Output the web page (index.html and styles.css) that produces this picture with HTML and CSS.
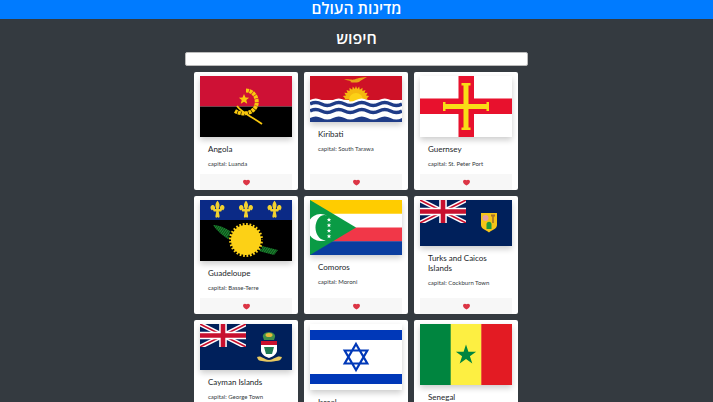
FILE: index.html
```html
<!DOCTYPE html>
<html lang="he">
<head>
	<meta charset="utf-8">
	<title>מדינות העולם</title>
	<link rel="stylesheet" href="styles.css">
</head>
<body>
	<svg class="defs" width="0" height="0">
		<symbol id="union" viewBox="0 0 46 23">
			<rect width="46" height="23" fill="#00205b"/>
			<path d="M0 0L46 23M46 0L0 23" stroke="#fff" stroke-width="4.600"/>
			<path d="M0 0L46 23M46 0L0 23" stroke="#c8102e" stroke-width="1.600"/>
			<path d="M23 0V23M0 11.500H46" stroke="#fff" stroke-width="7.600"/>
			<path d="M23 0V23M0 11.500H46" stroke="#c8102e" stroke-width="4.600"/>
		</symbol>
		<symbol id="heart" viewBox="0 0 16 16">
			<path d="M8 15C-7 6 3-2 8 3c5-5 15 3 0 12z" fill="#dc3545"/>
		</symbol>
		<symbol id="fleur" viewBox="0 0 15 19">
			<path d="M7.500 0C5 3 5 5.500 6.300 8.500H5C5.500 6 4 4 2.200 4.500 0 5.200 0 8.500 2 10 2.500 8.800 3 9 3.800 11H6.300L5.500 15C5 17 6.300 18 7.500 16.500 8.700 18 10 17 9.500 15L8.700 11H11.200C12 9 12.500 8.800 13 10 15 8.500 15 5.200 12.800 4.500 11 4 9.500 6 10 8.500H8.700C10 5.500 10 3 7.500 0Z" fill="#f2d230"/>
		</symbol>
		<pattern id="cane" width="2" height="2" patternUnits="userSpaceOnUse" patternTransform="rotate(35)">
			<rect width="2" height="2" fill="#0a4a18"/>
			<rect width="1" height="2" fill="#1f8a32"/>
		</pattern>
	</svg>

	<header class="topbar">
		<h1>מדינות העולם</h1>
	</header>

	<main class="page">
		<h2 class="search-label">חיפוש</h2>
		<input class="search-input" type="text">

		<div class="countries">
			<article class="card">
				<svg class="flag" width="92" height="61" viewBox="0 0 92 61">
					<rect width="92" height="30.500" fill="#ce1135"/>
					<rect y="30.500" width="92" height="30.500" fill="#000"/>
					<path d="M46 14.500C55 14.500 59.500 25 55 32 51 38 42 39 35 35" fill="none" stroke="#f9c80e" stroke-width="4" stroke-dasharray="3 .6"/>
					<path d="M37 30C42 37 51 40 62 48" fill="none" stroke="#f9c80e" stroke-width="1.800"/>
					<path d="M44 18l1.500 3.400 3.600.3-2.800 2.400.9 3.600L44 25.800l-3.200 1.900.9-3.600-2.800-2.400 3.600-.3z" fill="#f9c80e"/>
				</svg>
				<div class="card-body">
					<h5 class="name">Angola</h5>
					<p class="capital">capital: Luanda</p>
				</div>
				<div class="card-foot"><svg class="like"><use href="#heart"/></svg></div>
			</article>

			<article class="card">
				<svg class="flag" width="92" height="46" viewBox="0 0 92 46">
					<rect width="92" height="24" fill="#ce1126"/>
					<path d="M46 10l1.200 3 2-2.500.6 3.200 2.700-1.900-.1 3.300 3.100-1.100-1 3.100 3.200-.3-1.700 2.800 3.100.5-2.300 2.300 1.500 1H33.700l1.500-1-2.300-2.300 3.100-.5-1.700-2.800 3.200.3-1-3.100 3.100 1.100-.1-3.300 2.700 1.900.6-3.200 2 2.500z" fill="#f5b90f"/>
					<circle cx="46" cy="24" r="7" fill="#fcd116"/>
					<path d="M34 3.500C38 3 42 4 44 3.500 47 2.500 50 1.500 57 1 53 3 51 4.500 49 6 46 7 42 6.500 40 6 43 5 38 4.500 34 3.500Z" fill="#e8a317"/>
					<path d="M0 24c3.800-2 7.700-2 11.500 0s7.700 2 11.500 0 7.700-2 11.500 0 7.700 2 11.500 0 7.700-2 11.500 0 7.700 2 11.500 0 7.700-2 11.500 0 7.700 2 11.500 0V46H0Z" fill="#fff"/>
					<path d="M0 28c3.800-2 7.700-2 11.500 0s7.700 2 11.500 0 7.700-2 11.500 0 7.700 2 11.500 0 7.700-2 11.500 0 7.700 2 11.500 0 7.700-2 11.500 0 7.700 2 11.500 0M0 35c3.800-2 7.700-2 11.500 0s7.700 2 11.500 0 7.700-2 11.500 0 7.700 2 11.500 0 7.700-2 11.500 0 7.700 2 11.500 0 7.700-2 11.500 0 7.700 2 11.500 0" fill="none" stroke="#1f3c87" stroke-width="3.400"/>
					<path d="M0 42c3.800-2 7.700-2 11.500 0s7.700 2 11.500 0 7.700-2 11.500 0 7.700 2 11.500 0 7.700-2 11.500 0 7.700 2 11.500 0 7.700-2 11.500 0 7.700 2 11.500 0V46H0Z" fill="#1f3c87"/>
				</svg>
				<div class="card-body">
					<h5 class="name">Kiribati</h5>
					<p class="capital">capital: South Tarawa</p>
				</div>
				<div class="card-foot"><svg class="like"><use href="#heart"/></svg></div>
			</article>

			<article class="card">
				<svg class="flag" width="92" height="61" viewBox="0 0 92 61">
					<rect width="92" height="61" fill="#fff"/>
					<path d="M38.500 0H54V22.500H92V38H54V61H38.500V38H0V22.500H38.500Z" fill="#e8112d"/>
					<path d="M43.500 9.500H41.500V7H50.500V9.500H48.500V28H66.500V26H69V35H66.500V33H48.500V51.500H50.500V54H41.500V51.500H43.500V33H25.500V35H23V26H25.500V28H43.500Z" fill="#f9dd16"/>
				</svg>
				<div class="card-body">
					<h5 class="name">Guernsey</h5>
					<p class="capital">capital: St. Peter Port</p>
				</div>
				<div class="card-foot"><svg class="like"><use href="#heart"/></svg></div>
			</article>

			<article class="card">
				<svg class="flag" width="92" height="61" viewBox="0 0 92 61">
					<rect width="92" height="61" fill="#000"/>
					<rect width="92" height="20" fill="#0b2a86"/>
					<use href="#fleur" x="10" y="0.500" width="15" height="19"/>
					<use href="#fleur" x="38.500" y="0.500" width="15" height="19"/>
					<use href="#fleur" x="67" y="0.500" width="15" height="19"/>
					<path d="M13 25C20 25 28 29 34 34L30 40C24 37 17 31 13 25Z" fill="url(#cane)"/>
					<path d="M58 45L78 50 74 55 55 50Z" fill="url(#cane)"/>
					<circle cx="46" cy="40" r="17" fill="#fcd116"/>
					<circle cx="46" cy="40" r="16.500" fill="none" stroke="#000" stroke-width="3" stroke-dasharray="1.800 1.800"/>
				</svg>
				<div class="card-body">
					<h5 class="name">Guadeloupe</h5>
					<p class="capital">capital: Basse-Terre</p>
				</div>
				<div class="card-foot"><svg class="like"><use href="#heart"/></svg></div>
			</article>

			<article class="card">
				<svg class="flag" width="92" height="55" viewBox="0 0 92 55">
					<rect width="92" height="14" fill="#ffcc00"/>
					<rect y="13.750" width="92" height="14" fill="#fff"/>
					<rect y="27.500" width="92" height="14" fill="#f13748"/>
					<rect y="41.250" width="92" height="13.750" fill="#0a3d9f"/>
					<path d="M0 0L46 27.500 0 55Z" fill="#0a9b45"/>
					<path d="M17 15.500A13.500 13.500 0 1 0 17 39.500 9 12.500 0 1 1 17 15.500Z" fill="#fff"/>
					<path d="M19 17.500l.6 1.500 1.600.1-1.200 1 .4 1.600-1.400-.9-1.400.9.4-1.600-1.200-1 1.600-.1zM19 23l.6 1.500 1.600.1-1.200 1 .4 1.600-1.400-.9-1.400.9.4-1.600-1.200-1 1.600-.1zM19 28.500l.6 1.500 1.600.1-1.200 1 .4 1.600-1.400-.9-1.400.9.4-1.600-1.200-1 1.600-.1zM19 34l.6 1.500 1.600.1-1.200 1 .4 1.600-1.400-.9-1.400.9.4-1.600-1.200-1 1.600-.1z" fill="#fff"/>
				</svg>
				<div class="card-body">
					<h5 class="name">Comoros</h5>
					<p class="capital">capital: Moroni</p>
				</div>
				<div class="card-foot"><svg class="like"><use href="#heart"/></svg></div>
			</article>

			<article class="card">
				<svg class="flag" width="92" height="46" viewBox="0 0 92 46">
					<rect width="92" height="46" fill="#00205b"/>
					<use href="#union" width="46" height="23"/>
					<path d="M61 13H77V25C77 29 72 30 69 32.500 66 30 61 29 61 25Z" fill="#f5c518"/>
					<circle cx="65.500" cy="18" r="3" fill="#e8a0a0"/>
					<path d="M71 14.500H75V16.500H73.800V23H72.200V16.500H71Z" fill="#a8732a"/>
					<path d="M66.500 29V24C67 21 71 21 71.500 24V29Z" fill="#1f9a3e"/>
				</svg>
				<div class="card-body">
					<h5 class="name">Turks and Caicos Islands</h5>
					<p class="capital">capital: Cockburn Town</p>
				</div>
				<div class="card-foot"><svg class="like"><use href="#heart"/></svg></div>
			</article>

			<article class="card">
				<svg class="flag" width="92" height="46" viewBox="0 0 92 46">
					<rect width="92" height="46" fill="#00205b"/>
					<use href="#union" width="46" height="23"/>
					<path d="M63 13C62 11 65 8 69 8 73 8 76 11 75 13L74 16H64Z" fill="#3f8f4a"/>
					<ellipse cx="69" cy="11" rx="3.500" ry="2" fill="#e8b93a"/>
					<path d="M61 17H77V27C76 31 72 33 69 34 66 33 62 31 61 27Z" fill="#fff"/>
					<rect x="61" y="17" width="16" height="4" fill="#c8102e"/>
					<path d="M64 23H74L72 30H66Z" fill="#1f7a52"/>
					<path d="M57 33C61 31 63 35 69 36 75 35 77 31 82 33 81 36 79 37 76 37 73 38 65 38 62 37 59 37 58 36 57 33Z" fill="#e8c860"/>
				</svg>
				<div class="card-body">
					<h5 class="name">Cayman Islands</h5>
					<p class="capital">capital: George Town</p>
				</div>
				<div class="card-foot"><svg class="like"><use href="#heart"/></svg></div>
			</article>

			<article class="card">
				<svg class="flag" width="92" height="66" viewBox="0 0 92 66">
					<rect width="92" height="66" fill="#fff"/>
					<rect y="6" width="92" height="10" fill="#0038b8"/>
					<rect y="50" width="92" height="10" fill="#0038b8"/>
					<path d="M46 20L57.300 39.500H34.700ZM46 46L34.700 26.500H57.300Z" fill="none" stroke="#0038b8" stroke-width="2.200"/>
				</svg>
				<div class="card-body">
					<h5 class="name">Israel</h5>
					<p class="capital">capital: Jerusalem</p>
				</div>
				<div class="card-foot"><svg class="like"><use href="#heart"/></svg></div>
			</article>

			<article class="card">
				<svg class="flag" width="92" height="61" viewBox="0 0 92 61">
					<rect width="31" height="61" fill="#00853f"/>
					<rect x="30.700" width="31" height="61" fill="#fdef42"/>
					<rect x="61.300" width="30.700" height="61" fill="#e31b23"/>
					<path d="M46 20.500l2.400 7.300h7.700l-6.200 4.500 2.400 7.300-6.300-4.500-6.300 4.500 2.400-7.300-6.200-4.500h7.700z" fill="#00853f"/>
				</svg>
				<div class="card-body">
					<h5 class="name">Senegal</h5>
					<p class="capital">capital: Dakar</p>
				</div>
				<div class="card-foot"><svg class="like"><use href="#heart"/></svg></div>
			</article>
		</div>
	</main>
</body>
</html>
```
FILE: styles.css
```css
html, body {
	height: 100%;
}
body {
	margin: 0;
	background: #343a40;
	color: #212529;
	font-family: Lato, "Open Sans", sans-serif;
	overflow: hidden;
}
.defs {
	display: block;
	height: 0;
}
.topbar {
	background: #007bff;
	height: 19px;
}
.topbar h1 {
	margin: 0;
	color: #fff;
	font-family: "Open Sans", sans-serif;
	font-size: 15.600px;
	font-weight: 600;
	line-height: 17px;
	text-align: center;
}
.page {
	display: flex;
	flex-direction: column;
	align-items: center;
}
.search-label {
	margin: 9px 0 4px;
	color: #fff;
	font-family: "Open Sans", sans-serif;
	font-size: 16px;
	font-weight: 600;
	line-height: 20px;
}
.search-input {
	box-sizing: border-box;
	width: 343px;
	height: 14px;
	margin: 0 0 6px;
	padding: 0;
	background: #fff;
	border: 1px solid #bbb;
	border-radius: 2px;
}
.countries {
	display: grid;
	grid-template-columns: repeat(3, 104px);
	grid-auto-rows: 118px;
	gap: 6px;
	margin-right: 1px;
}
.card {
	box-sizing: border-box;
	display: flex;
	flex-direction: column;
	padding: 4px 6px 0;
	background: #fff;
	border-radius: 2px;
}
.flag {
	display: block;
	flex: none;
	box-shadow: 0 3px 6px rgba(0, 0, 0, .2);
}
.card-body {
	flex: 1;
	padding: 8px 8px 0;
}
.name {
	margin: 0 0 4.800px;
	font-size: 8px;
	font-weight: 400;
	line-height: 9.600px;
}
.capital {
	margin: 0;
	color: #343a40;
	font-size: 6px;
	line-height: 9.600px;
}
.card-foot {
	display: flex;
	justify-content: center;
	align-items: center;
	height: 16px;
	background: #f7f7f7;
}
.like {
	width: 7px;
	height: 7px;
}
```
